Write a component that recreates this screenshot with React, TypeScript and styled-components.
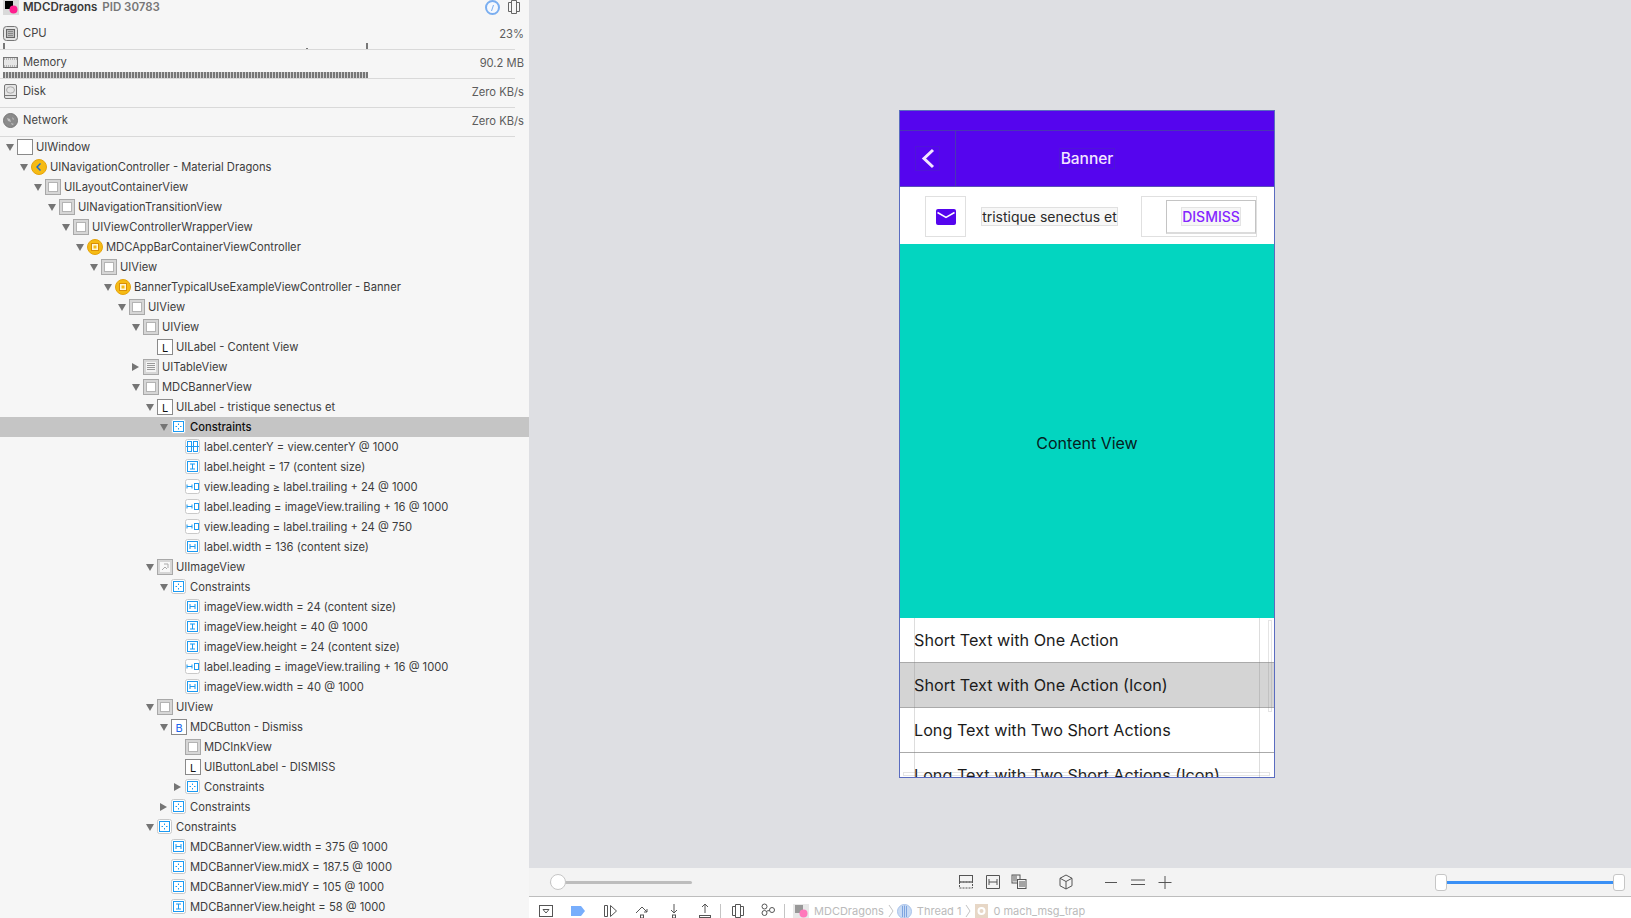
import React from 'react';
import styled, { createGlobalStyle } from 'styled-components';

const GlobalStyle = createGlobalStyle`
    html, body {
        margin: 0;
        padding: 0;
        overflow: hidden;
        background: #dedfe3;
    }
    * {
        box-sizing: border-box;
    }
`;

const Page = styled.div`
    display: flex;
    width: 1631px;
    height: 918px;
    overflow: hidden;
    font-family: Inter, "Liberation Sans", sans-serif;
`;

/* ---------- debug navigator ---------- */

const Sidebar = styled.aside`
    width: 529px;
    height: 918px;
    flex: none;
    overflow: hidden;
    background: #f6f6f6;
`;

const AppHeader = styled.div`
    display: flex;
    align-items: center;
    height: 21px;
    padding: 0 8px 7px 3px;
    font-size: 11.5px;
    font-weight: 600;
    color: #3a3a3a;
`;

const AppName = styled.span`
    margin-left: 4px;
`;

const AppPid = styled.span`
    margin-left: 5px;
    color: #777;
`;

const HeaderTools = styled.div`
    display: flex;
    align-items: center;
    gap: 7px;
    margin-left: auto;
`;

const MetricRow = styled.div`
    position: relative;
    display: flex;
    align-items: center;
    height: 29px;
    margin-right: 14px;
    padding: 0 0 4px 3px;
    border-bottom: 1px solid #d9d9d9;
    font-size: 11.2px;
    color: #444;
`;

const MetricLabel = styled.span`
    margin-left: 5px;
`;

const MetricValue = styled.span`
    position: absolute;
    top: 6px;
    right: -9px;
    color: #5c5c5c;
`;

const CpuTick = styled.i<{ $x: number; $h: number }>`
    position: absolute;
    bottom: 0;
    left: ${(p) => p.$x}px;
    width: 2px;
    height: ${(p) => p.$h}px;
    background: #777;
`;

const MemoryGraph = styled.i`
    position: absolute;
    bottom: 0;
    left: 3px;
    width: 365px;
    height: 6px;
    background: repeating-linear-gradient(90deg, #777 0 2px, #d0d0d0 2px 3px);
`;

const Tree = styled.div`
    display: flex;
    flex-direction: column;
`;

const TreeRow = styled.div<{ $depth: number; $selected?: boolean }>`
    display: flex;
    flex: none;
    align-items: center;
    height: 20px;
    padding-left: ${(p) => p.$depth * 14 + 4}px;
    background: ${(p) => (p.$selected ? '#c5c5c5' : 'transparent')};
    font-size: 11.2px;
    font-weight: ${(p) => (p.$selected ? 500 : 400)};
    color: ${(p) => (p.$selected ? '#111' : '#3d3d3d')};
    white-space: nowrap;
`;

const ArrowSlot = styled.span`
    display: flex;
    flex: none;
    align-items: center;
    justify-content: center;
    width: 11px;
    margin-right: 2px;
`;

const Arrow = styled.i<{ $open: boolean }>`
    width: 0;
    height: 0;
    border-style: solid;
    border-color: transparent;
    ${(p) =>
        p.$open
            ? 'border-width: 7px 4px 0 4px; border-top-color: #757575;'
            : 'border-width: 4.5px 0 4.5px 7px; border-left-color: #757575;'}
`;

const TreeLabel = styled.span`
    margin-left: 3px;
`;

/* ---------- canvas ---------- */

const Main = styled.main`
    display: flex;
    flex: 1;
    flex-direction: column;
    min-width: 0;
    height: 918px;
`;

const Canvas = styled.div`
    flex: none;
    height: 868px;
    padding: 110px 0 0 370px;
    background: #dedfe3;
`;

const Phone = styled.div`
    display: flex;
    flex-direction: column;
    width: 376px;
    height: 668px;
    overflow: hidden;
    border: 1px solid #5a6cc0;
    background: #fff;
`;

const StatusBar = styled.div`
    flex: none;
    height: 20px;
    background: #5505ee;
    border-bottom: 1px solid #4a36b4;
`;

const NavBar = styled.div`
    display: flex;
    flex: none;
    height: 56px;
    align-items: stretch;
    background: #5505ee;
    border-bottom: 1px solid #5a50b8;
`;

const BackSlot = styled.div`
    display: flex;
    flex: none;
    align-items: center;
    justify-content: center;
    width: 56px;
    border-right: 1px solid #4a36b4;
`;

const BackBox = styled.div`
    display: flex;
    align-items: center;
    justify-content: center;
    width: 25px;
    height: 25px;
    border: 1px solid #4f14d8;
`;

const NavTitleWrap = styled.div`
    display: flex;
    flex: 1;
    align-items: center;
    justify-content: center;
    padding-right: 56px;
`;

const NavTitle = styled.div`
    padding: 0 1px;
    border: 1px solid #4f14d8;
    font-size: 15.5px;
    font-weight: 500;
    line-height: 19px;
    color: #f3e6ff;
`;

const Banner = styled.div`
    display: flex;
    flex: none;
    align-items: center;
    height: 57px;
    padding: 2px 0 0 25px;
    background: #fff;
`;

const GuideBox = styled.div`
    display: flex;
    flex: none;
    align-items: center;
    justify-content: center;
    border: 1px solid #e0e0e0;
`;

const ImageBox = styled(GuideBox)`
    width: 41px;
    height: 41px;
`;

const BannerLabel = styled(GuideBox)`
    width: 137px;
    height: 19px;
    margin-left: 15px;
    background: #f7f7f7;
    font-size: 14px;
    color: #2a2a2a;
    white-space: nowrap;
    overflow: hidden;
`;

const ButtonBox = styled(GuideBox)`
    justify-content: flex-end;
    width: 116px;
    height: 41px;
    margin-left: 23px;
`;

const DismissButton = styled.div`
    display: flex;
    align-items: center;
    justify-content: center;
    width: 90px;
    height: 34px;
    border: 1px solid #c4c4c4;
    border-bottom-width: 2px;
    border-bottom-color: #dcdcdc;
`;

const DismissLabel = styled.span`
    padding: 0;
    background: #f6f6f6;
    outline: 1px solid #e4e4e4;
    font-size: 14px;
    font-weight: 500;
    line-height: 17px;
    color: #8426ff;
`;

const ContentView = styled.div`
    display: flex;
    flex: none;
    align-items: center;
    justify-content: center;
    height: 374px;
    padding-top: 24px;
    background: #03d5c0;
    font-size: 16px;
    color: #06211e;
`;

const TableView = styled.div`
    position: relative;
    flex: 1;
    min-height: 0;
    overflow: hidden;
`;

const TableRow = styled.div<{ $selected?: boolean }>`
    display: flex;
    align-items: center;
    height: 45px;
    padding-left: 14px;
    border-bottom: 1px solid #aaa;
    background: ${(p) => (p.$selected ? '#d4d4d4' : '#fff')};
    font-size: 16.2px;
    color: #1b1b1b;
    white-space: nowrap;
`;

const GuideLine = styled.i<{ $x: number }>`
    position: absolute;
    top: 0;
    bottom: 0;
    left: ${(p) => p.$x}px;
    width: 1px;
    background: rgba(120, 120, 120, 0.25);
`;

const ScrollV = styled.i`
    position: absolute;
    top: 2px;
    left: 368px;
    width: 4px;
    height: 92px;
    border: 1px solid rgba(120, 120, 120, 0.2);
`;

const ScrollH = styled.i`
    position: absolute;
    top: 154px;
    left: 3px;
    width: 367px;
    height: 4px;
    border: 1px solid rgba(120, 120, 120, 0.2);
`;

/* ---------- bottom bars ---------- */

const CanvasBar = styled.div`
    display: flex;
    flex: none;
    align-items: center;
    height: 29px;
    padding: 0 6px 0 21px;
    background: #f3f3f3;
    border-bottom: 1px solid #bdbdbd;
`;

const ZoomSlider = styled.div`
    position: relative;
    display: flex;
    align-items: center;
    width: 142px;
    height: 16px;
`;

const SliderTrack = styled.i`
    width: 100%;
    height: 3px;
    border-radius: 2px;
    background: #bdbdbd;
`;

const SliderKnob = styled.i`
    position: absolute;
    top: 0;
    left: 0;
    width: 16px;
    height: 16px;
    border: 1px solid #c6c6c6;
    border-radius: 50%;
    background: #fff;
`;

const CanvasTools = styled.div`
    display: flex;
    align-items: center;
    margin-left: 261px;
`;

const ToolSlot = styled.span<{ $w: number; $ml?: number }>`
    display: flex;
    flex: none;
    align-items: center;
    justify-content: center;
    width: ${(p) => p.$w}px;
    margin-left: ${(p) => p.$ml ?? 0}px;
`;

const RangeSlider = styled.div`
    display: flex;
    align-items: center;
    margin-left: auto;
`;

const RangeKnob = styled.i`
    width: 12px;
    height: 17px;
    border: 1px solid #c6c6c6;
    border-radius: 3px;
    background: #fff;
`;

const RangeFill = styled.i`
    width: 166px;
    height: 3px;
    background: #3a90f5;
`;

const DebugBar = styled.div`
    display: flex;
    flex: none;
    align-items: center;
    height: 28px;
    padding-left: 1px;
    background: #fff;
    font-size: 11px;
    color: #bbb;
    white-space: nowrap;
`;

const DebugSep = styled.i<{ $left: number; $right: number }>`
    flex: none;
    width: 1px;
    height: 15px;
    margin: 0 ${(p) => p.$right}px 0 ${(p) => p.$left}px;
    background: #c4c4c4;
`;

const Crumb = styled.span<{ $ml: number }>`
    display: flex;
    margin-left: ${(p) => p.$ml}px;
`;

/* ---------- drawings ---------- */

const BLUE = '#1b9af2';

function ConstraintGlyph({ kind }: { kind: string }) {
    if (kind === 'dots') {
        return (
            <g stroke={BLUE} fill="none">
                <rect x="2.5" y="2.5" width="10" height="10" />
                <path d="M7.5 4.5v1.5M7.5 9v1.5M4.5 7.5H6M9 7.5h1.5" />
            </g>
        );
    }
    if (kind === 'center') {
        return (
            <g stroke={BLUE} fill="none">
                <rect x="2.5" y="2.5" width="4" height="10" />
                <rect x="8.5" y="2.5" width="4" height="10" />
                <path d="M1 7.5h13" />
            </g>
        );
    }
    if (kind === 'height') {
        return (
            <g stroke={BLUE} fill="none">
                <rect x="2.5" y="2.5" width="10" height="10" />
                <path d="M5 5h5M5 10h5M7.5 5v5" />
            </g>
        );
    }
    if (kind === 'width') {
        return (
            <g stroke={BLUE} fill="none">
                <rect x="2.5" y="2.5" width="10" height="10" />
                <path d="M5 5v5M10 5v5M5 7.5h5" />
            </g>
        );
    }
    return (
        <g stroke={BLUE} fill="none">
            <rect x="9.5" y="4.5" width="4" height="6" />
            <path d="M2 5.5v4M2 7.5h5M7 5.5v4" />
        </g>
    );
}

function TreeIcon({ kind }: { kind: string }) {
    const isConstraint = ['dots', 'center', 'height', 'width', 'leading'].includes(kind);
    return (
        <svg width="16" height="16" viewBox="0 0 16 16" style={{ flex: 'none' }}>
            {kind === 'window' && <rect x="0.5" y="0.5" width="15" height="15" fill="#fff" stroke="#8a8a8a" />}
            {kind === 'view' && (
                <>
                    <rect x="0.5" y="0.5" width="15" height="15" fill="#d6d6d6" stroke="#a8a8a8" />
                    <rect x="3.5" y="3.5" width="9" height="9" fill="#fff" stroke="#b4b4b4" />
                </>
            )}
            {kind === 'table' && (
                <>
                    <rect x="0.5" y="0.5" width="15" height="15" fill="#d6d6d6" stroke="#a8a8a8" />
                    <rect x="3" y="3" width="10" height="10" fill="#f4f4f4" />
                    <path d="M4 4.5h8M4 6.5h8M4 8.5h8M4 10.5h8" stroke="#999" />
                </>
            )}
            {kind === 'image' && (
                <>
                    <rect x="0.5" y="0.5" width="15" height="15" fill="#d6d6d6" stroke="#a8a8a8" />
                    <rect x="3" y="3" width="10" height="10" fill="#f8f8f8" />
                    <path d="M5 11l3-3 2 2M7 5h4v4" stroke="#aaa" fill="none" />
                </>
            )}
            {kind === 'nav' && (
                <>
                    <circle cx="8" cy="8" r="7.5" fill="#f6bb14" stroke="#e5a30c" />
                    <path d="M9.5 4.5L6 8l3.5 3.5" stroke="#1366d6" strokeWidth="1.4" fill="none" />
                </>
            )}
            {kind === 'vc' && (
                <>
                    <circle cx="8" cy="8" r="7.5" fill="#f6bb14" stroke="#e5a30c" />
                    <rect x="4.5" y="4.5" width="7" height="7" fill="#fff6d8" stroke="#d98e08" />
                    <rect x="6.5" y="6.5" width="3" height="3" fill="#f6bb14" />
                </>
            )}
            {kind === 'label' && (
                <>
                    <rect x="0.5" y="0.5" width="15" height="15" fill="#fff" stroke="#8a8a8a" />
                    <text x="8" y="12.5" fontSize="11" fill="#111" textAnchor="middle" fontFamily="Inter, sans-serif">L</text>
                </>
            )}
            {kind === 'button' && (
                <>
                    <rect x="0.5" y="0.5" width="15" height="15" fill="#fff" stroke="#8a8a8a" />
                    <text x="8" y="12.5" fontSize="11" fill="#1a66ee" textAnchor="middle" fontFamily="Inter, sans-serif">B</text>
                </>
            )}
            {isConstraint && (
                <>
                    <rect x="0.5" y="0.5" width="14" height="14" rx="2" fill="#fff" stroke="#c9c9c9" />
                    <ConstraintGlyph kind={kind} />
                </>
            )}
        </svg>
    );
}

function MetricIcon({ kind }: { kind: string }) {
    return (
        <svg width="15" height="15" viewBox="0 0 15 15" style={{ flex: 'none' }}>
            {kind === 'cpu' && (
                <>
                    <rect x="0.5" y="0.5" width="14" height="14" rx="3" fill="#e4e4e4" stroke="#777" />
                    <rect x="3.5" y="3.5" width="8" height="8" fill="#bbb" stroke="#666" />
                    <path d="M5 5.5h5M5 7.5h5M5 9.5h5" stroke="#888" />
                </>
            )}
            {kind === 'memory' && (
                <>
                    <rect x="0.5" y="2.5" width="14" height="10" fill="#e6e6e6" stroke="#777" />
                    <path d="M1 4h13M1 11h13" stroke="#888" strokeDasharray="1 1" />
                </>
            )}
            {kind === 'disk' && (
                <>
                    <rect x="1.5" y="0.5" width="12" height="14" rx="1.5" fill="#e4e4e4" stroke="#777" />
                    <ellipse cx="7.5" cy="6" rx="4" ry="3.2" fill="none" stroke="#aaa" />
                    <path d="M2 11.5h11" stroke="#777" />
                </>
            )}
            {kind === 'network' && (
                <>
                    <circle cx="7.5" cy="7.5" r="7" fill="#8b8b8b" stroke="#777" />
                    <path d="M4 5l3 1 1 3-3-1zM9 4l2 2-1 1zM8 10l3 1-2 1z" fill="#c4c4c4" />
                </>
            )}
        </svg>
    );
}

function AppIcon({ faded }: { faded?: boolean }) {
    return (
        <svg width="16" height="15" viewBox="0 0 16 15" style={{ flex: 'none', opacity: faded ? 0.6 : 1 }}>
            <rect width="16" height="15" fill="#d9d9d9" />
            <rect x="2" y="1" width="8" height="8" fill={faded ? '#555' : '#000'} />
            <circle cx="10.5" cy="9.5" r="4" fill="#ff1f8f" />
        </svg>
    );
}

const tool = { width: 16, height: 16, viewBox: '0 0 16 16', fill: 'none', stroke: '#555' };

function ToolIcon({ kind }: { kind: string }) {
    return (
        <svg {...tool} style={{ flex: 'none' }}>
            {kind === 'frames' && (
                <>
                    <rect x="1.5" y="1.5" width="13" height="6.500" />
                    <rect x="1.5" y="8" width="13" height="6" strokeDasharray="2 1" />
                </>
            )}
            {kind === 'fit' && <path d="M1.5 1.500h13v13h-13zM4 5v6M12 5v6M4 8h8" />}
            {kind === 'layers' && (
                <>
                    <rect x="1" y="1" width="8" height="8" />
                    <rect x="6.5" y="5.500" width="8.500" height="9" fill="#f3f3f3" />
                    <path d="M3 1.500v6M5 1.500v6M9 7v6M11 7v6M13 7v6" />
                </>
            )}
            {kind === 'cube' && <path d="M8 1l6 3.250v7.500L8 15l-6-3.250v-7.500zM2 4.250L8 7.500l6-3.250M8 7.500V15" />}
            {kind === 'minus' && <path d="M2 8.500h12" />}
            {kind === 'equal' && <path d="M1 6h14M1 10.500h14" />}
            {kind === 'plus' && <path d="M1.500 8.500h13M8 2v13" />}
            {kind === 'debug-toggle' && (
                <>
                    <rect x="1.5" y="2.500" width="13" height="11" />
                    <path d="M5 6.500h6L8 10z" />
                </>
            )}
            {kind === 'breakpoint' && <path d="M1 3h10l4 5-4 5H1z" fill="#78aefc" stroke="none" />}
            {kind === 'continue' && <path d="M2.500 2.500h3v11h-3zM8.500 2.500l6 5.500-6 5.500z" />}
            {kind === 'over' && (
                <>
                    <path d="M2 10l6-6 5 5M13 6v3h-3" />
                    <rect x="6.500" y="12" width="3" height="3" />
                </>
            )}
            {kind === 'into' && (
                <>
                    <path d="M8 1v9M5 7l3 3 3-3" />
                    <rect x="6.500" y="12" width="3" height="3" />
                </>
            )}
            {kind === 'out' && (
                <>
                    <path d="M8 10V1M5 4l3-3 3 3" />
                    <rect x="2.500" y="12.500" width="11" height="2" />
                </>
            )}
            {kind === 'views' && <path d="M5.500 1.500h5v13h-5zM5.500 3.500h-3v9h3M10.500 3.500h3v9h-3" />}
            {kind === 'graph' && (
                <>
                    <circle cx="4.500" cy="3.500" r="2.500" />
                    <circle cx="4.500" cy="10" r="2.500" />
                    <circle cx="12" cy="7" r="2.500" />
                    <path d="M7 8l2.500-.5" />
                </>
            )}
        </svg>
    );
}

function ThreadIcon() {
    return (
        <svg width="15" height="15" viewBox="0 0 15 15" style={{ flex: 'none' }}>
            <circle cx="7.500" cy="7.500" r="7" fill="#c9dbf4" stroke="#a9c3ea" />
            <path d="M5.500 2v11M7.500 1.500v12M9.500 2v11" stroke="#7da4e0" />
        </svg>
    );
}

function GearIcon() {
    return (
        <svg width="13" height="14" viewBox="0 0 13 14" style={{ flex: 'none' }}>
            <rect width="13" height="14" fill="#e7d7c6" />
            <circle cx="6.500" cy="7" r="3" fill="none" stroke="#fff" strokeWidth="2" />
        </svg>
    );
}

function Chevron() {
    return (
        <svg width="6" height="14" viewBox="0 0 6 14" style={{ margin: '0 0 0 4px', flex: 'none' }}>
            <path d="M1 1l4 6-4 6" fill="none" stroke="#c4c4c4" />
        </svg>
    );
}

type Node = { d: number; kind: string; text: string; arrow?: 'open' | 'closed'; selected?: boolean };

const nodes: Node[] = [
    { d: 0, kind: 'window', text: 'UIWindow', arrow: 'open' },
    { d: 1, kind: 'nav', text: 'UINavigationController - Material Dragons', arrow: 'open' },
    { d: 2, kind: 'view', text: 'UILayoutContainerView', arrow: 'open' },
    { d: 3, kind: 'view', text: 'UINavigationTransitionView', arrow: 'open' },
    { d: 4, kind: 'view', text: 'UIViewControllerWrapperView', arrow: 'open' },
    { d: 5, kind: 'vc', text: 'MDCAppBarContainerViewController', arrow: 'open' },
    { d: 6, kind: 'view', text: 'UIView', arrow: 'open' },
    { d: 7, kind: 'vc', text: 'BannerTypicalUseExampleViewController - Banner', arrow: 'open' },
    { d: 8, kind: 'view', text: 'UIView', arrow: 'open' },
    { d: 9, kind: 'view', text: 'UIView', arrow: 'open' },
    { d: 10, kind: 'label', text: 'UILabel - Content View' },
    { d: 9, kind: 'table', text: 'UITableView', arrow: 'closed' },
    { d: 9, kind: 'view', text: 'MDCBannerView', arrow: 'open' },
    { d: 10, kind: 'label', text: 'UILabel - tristique senectus et', arrow: 'open' },
    { d: 11, kind: 'dots', text: 'Constraints', arrow: 'open', selected: true },
    { d: 12, kind: 'center', text: 'label.centerY = view.centerY @ 1000' },
    { d: 12, kind: 'height', text: 'label.height = 17 (content size)' },
    { d: 12, kind: 'leading', text: 'view.leading ≥ label.trailing + 24 @ 1000' },
    { d: 12, kind: 'leading', text: 'label.leading = imageView.trailing + 16 @ 1000' },
    { d: 12, kind: 'leading', text: 'view.leading = label.trailing + 24 @ 750' },
    { d: 12, kind: 'width', text: 'label.width = 136 (content size)' },
    { d: 10, kind: 'image', text: 'UIImageView', arrow: 'open' },
    { d: 11, kind: 'dots', text: 'Constraints', arrow: 'open' },
    { d: 12, kind: 'width', text: 'imageView.width = 24 (content size)' },
    { d: 12, kind: 'height', text: 'imageView.height = 40 @ 1000' },
    { d: 12, kind: 'height', text: 'imageView.height = 24 (content size)' },
    { d: 12, kind: 'leading', text: 'label.leading = imageView.trailing + 16 @ 1000' },
    { d: 12, kind: 'width', text: 'imageView.width = 40 @ 1000' },
    { d: 10, kind: 'view', text: 'UIView', arrow: 'open' },
    { d: 11, kind: 'button', text: 'MDCButton - Dismiss', arrow: 'open' },
    { d: 12, kind: 'view', text: 'MDCInkView' },
    { d: 12, kind: 'label', text: 'UIButtonLabel - DISMISS' },
    { d: 12, kind: 'dots', text: 'Constraints', arrow: 'closed' },
    { d: 11, kind: 'dots', text: 'Constraints', arrow: 'closed' },
    { d: 10, kind: 'dots', text: 'Constraints', arrow: 'open' },
    { d: 11, kind: 'width', text: 'MDCBannerView.width = 375 @ 1000' },
    { d: 11, kind: 'dots', text: 'MDCBannerView.midX = 187.5 @ 1000' },
    { d: 11, kind: 'dots', text: 'MDCBannerView.midY = 105 @ 1000' },
    { d: 11, kind: 'height', text: 'MDCBannerView.height = 58 @ 1000' },
];

const canvasTools: [string, number][] = [
    ['frames', 26],
    ['fit', 27],
    ['layers', 26],
    ['cube', 68],
    ['minus', 22],
    ['equal', 32],
    ['plus', 22],
];

const debugTools: [string, number][] = [
    ['debug-toggle', 32],
    ['breakpoint', 32],
    ['continue', 32],
    ['over', 32],
    ['into', 32],
    ['out', 30],
];

const tableRows = [
    'Short Text with One Action',
    'Short Text with One Action (Icon)',
    'Long Text with Two Short Actions',
    'Long Text with Two Short Actions (Icon)',
];

const App: React.FC = () => {
    return (
        <Page>
            <GlobalStyle />
            <Sidebar>
                <AppHeader>
                    <AppIcon />
                    <AppName>MDCDragons</AppName>
                    <AppPid>PID 30783</AppPid>
                    <HeaderTools>
                        <svg width="15" height="15" viewBox="0 0 15 15">
                            <circle cx="7.500" cy="7.500" r="6.500" fill="#f4f8fe" stroke="#7aaef0" strokeWidth="2" />
                            <path d="M6.500 11l2-6" stroke="#7aaef0" />
                        </svg>
                        <svg width="14" height="14" viewBox="0 0 14 14" fill="none" stroke="#666">
                            <path d="M4.500 .5h5v13h-5zM4.500 2.500h-3v9h3M9.500 2.500h3v9h-3" />
                        </svg>
                    </HeaderTools>
                </AppHeader>
                <MetricRow>
                    <MetricIcon kind="cpu" />
                    <MetricLabel>CPU</MetricLabel>
                    <MetricValue>23%</MetricValue>
                    <CpuTick $x={3} $h={6} />
                    <CpuTick $x={306} $h={1} />
                    <CpuTick $x={366} $h={6} />
                </MetricRow>
                <MetricRow>
                    <MetricIcon kind="memory" />
                    <MetricLabel>Memory</MetricLabel>
                    <MetricValue>90.2 MB</MetricValue>
                    <MemoryGraph />
                </MetricRow>
                <MetricRow>
                    <MetricIcon kind="disk" />
                    <MetricLabel>Disk</MetricLabel>
                    <MetricValue>Zero KB/s</MetricValue>
                </MetricRow>
                <MetricRow>
                    <MetricIcon kind="network" />
                    <MetricLabel>Network</MetricLabel>
                    <MetricValue>Zero KB/s</MetricValue>
                </MetricRow>
                <Tree>
                    {nodes.map((n, i) => (
                        <TreeRow key={i} $depth={n.d} $selected={n.selected}>
                            <ArrowSlot>{n.arrow && <Arrow $open={n.arrow === 'open'} />}</ArrowSlot>
                            <TreeIcon kind={n.kind} />
                            <TreeLabel>{n.text}</TreeLabel>
                        </TreeRow>
                    ))}
                </Tree>
            </Sidebar>
            <Main>
                <Canvas>
                    <Phone>
                        <StatusBar />
                        <NavBar>
                            <BackSlot>
                                <BackBox>
                                    <svg width="14" height="21" viewBox="0 0 14 21" fill="none" stroke="#f3e6ff" strokeWidth="3">
                                        <path d="M12 2L3 10.500l9 8.500" />
                                    </svg>
                                </BackBox>
                            </BackSlot>
                            <NavTitleWrap>
                                <NavTitle>Banner</NavTitle>
                            </NavTitleWrap>
                        </NavBar>
                        <Banner>
                            <ImageBox>
                                <svg width="20" height="16" viewBox="0 0 20 16">
                                    <rect width="20" height="16" rx="2" fill="#5505ee" />
                                    <path d="M1.500 3.500L10 8.500l8.500-5" fill="none" stroke="#fff" strokeWidth="1.500" />
                                </svg>
                            </ImageBox>
                            <BannerLabel>tristique senectus et</BannerLabel>
                            <ButtonBox>
                                <DismissButton>
                                    <DismissLabel>DISMISS</DismissLabel>
                                </DismissButton>
                            </ButtonBox>
                        </Banner>
                        <ContentView>Content View</ContentView>
                        <TableView>
                            {tableRows.map((t, i) => (
                                <TableRow key={t} $selected={i === 1}>{t}</TableRow>
                            ))}
                            <GuideLine $x={14} />
                            <GuideLine $x={359} />
                            <ScrollV />
                            <ScrollH />
                        </TableView>
                    </Phone>
                </Canvas>
                <CanvasBar>
                    <ZoomSlider>
                        <SliderTrack />
                        <SliderKnob />
                    </ZoomSlider>
                    <CanvasTools>
                        {canvasTools.map(([k, w]) => (
                            <ToolSlot key={k} $w={w}><ToolIcon kind={k} /></ToolSlot>
                        ))}
                    </CanvasTools>
                    <RangeSlider>
                        <RangeKnob />
                        <RangeFill />
                        <RangeKnob />
                    </RangeSlider>
                </CanvasBar>
                <DebugBar>
                    {debugTools.map(([k, w]) => (
                        <ToolSlot key={k} $w={w}><ToolIcon kind={k} /></ToolSlot>
                    ))}
                    <DebugSep $left={0} $right={9} />
                    <ToolIcon kind="views" />
                    <ToolSlot $w={16} $ml={14}><ToolIcon kind="graph" /></ToolSlot>
                    <DebugSep $left={8} $right={8} />
                    <AppIcon faded />
                    <Crumb $ml={5}>MDCDragons</Crumb>
                    <Chevron />
                    <Crumb $ml={3}><ThreadIcon /></Crumb>
                    <Crumb $ml={5}>Thread 1</Crumb>
                    <Chevron />
                    <Crumb $ml={4}><GearIcon /></Crumb>
                    <Crumb $ml={5}>0 mach_msg_trap</Crumb>
                </DebugBar>
            </Main>
        </Page>
    );
};

export default App;
